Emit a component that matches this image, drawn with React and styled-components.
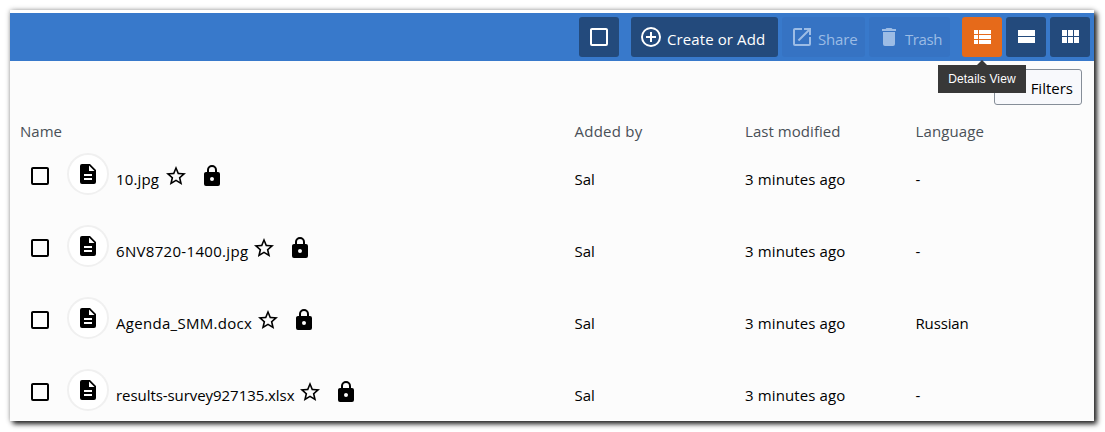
import React from "react";
import styled, { createGlobalStyle, css } from "styled-components";

const GlobalStyle = createGlobalStyle`
  * { box-sizing: border-box; }
  body {
    margin: 0;
    background: #fff;
    color: #000;
    font: 15px/24px "Open Sans", "Noto Sans", sans-serif;
    overflow: hidden;
  }
`;

const PATHS = {
  box: "M19,3H5C3.89,3 3,3.89 3,5V19A2,2 0 0,0 5,21H19A2,2 0 0,0 21,19V5C21,3.89 20.1,3 19,3M19,5V19H5V5H19Z",
  plus: "M12,20C7.59,20 4,16.41 4,12C4,7.59 7.59,4 12,4C16.41,4 20,7.59 20,12C20,16.41 16.41,20 12,20M12,2A10,10 0 0,0 2,12A10,10 0 0,0 12,22A10,10 0 0,0 22,12A10,10 0 0,0 12,2M13,7H11V11H7V13H11V17H13V13H17V11H13V7Z",
  share: "M14,3V5H17.59L7.76,14.83L9.17,16.24L19,6.41V10H21V3M19,19H5V5H12V3H5C3.89,3 3,3.9 3,5V19A2,2 0 0,0 5,21H19A2,2 0 0,0 21,19V12H19V19Z",
  trash: "M19,4H15.5L14.5,3H9.5L8.5,4H5V6H19M6,19A2,2 0 0,0 8,21H16A2,2 0 0,0 18,19V7H6V19Z",
  details: "M9,5V9H21V5M9,19H21V15H9M9,14H21V10H9M4,9H8V5H4M4,19H8V15H4M4,14H8V10H4V14Z",
  stream: "M4,5V11H21V5M4,18H21V12H4V18Z",
  grid: "M16,5V11H21V5M10,11H15V5H10M16,18H21V12H16M10,18H15V12H10M4,18H9V12H4M4,11H9V5H4V11Z",
  document: "M6,2A2,2 0 0,0 4,4V20A2,2 0 0,0 6,22H18A2,2 0 0,0 20,20V8L14,2M13,3.5L18.5,9H13M8,12H16V14H8M8,16H16V18H8Z",
  star: "M12,15.39L8.24,17.66L9.23,13.38L5.91,10.5L10.29,10.13L12,6.09L13.71,10.13L18.09,10.5L14.77,13.38L15.76,17.66M22,9.24L14.81,8.63L12,2L9.19,8.63L2,9.24L7.45,13.97L5.82,21L12,17.27L18.18,21L16.54,13.97L22,9.24Z",
  lock: "M12,17A2,2 0 0,0 14,15C14,13.89 13.1,13 12,13A2,2 0 0,0 10,15A2,2 0 0,0 12,17M18,8A2,2 0 0,1 20,10V20A2,2 0 0,1 18,22H6A2,2 0 0,1 4,20V10C4,8.89 4.9,8 6,8H7V6A5,5 0 0,1 12,1A5,5 0 0,1 17,6V8H18M12,3A3,3 0 0,0 9,6V8H15V6A3,3 0 0,0 12,3Z",
};

const Svg = styled.svg`
  display: block;
  flex: none;
  width: 24px;
  height: 24px;
  fill: currentColor;
`;

const Icon = ({ name, ...rest }) => (
  <Svg viewBox="0 0 24 24" fillRule="evenodd" aria-hidden="true" {...rest}>
    <path d={PATHS[name]} />
  </Svg>
);

const Page = styled.div`
  height: 432px;
  padding: 10px 11px 11px 10px;
`;

const Panel = styled.main`
  height: 411px;
  padding-top: 3px;
  background: linear-gradient(#fff 3px, #fcfcfc 3px);
  box-shadow: 3px 3px 5px rgba(0, 0, 0, 0.85), 0 0 5px rgba(0, 0, 0, 0.3);
`;

const Toolbar = styled.header`
  display: flex;
  justify-content: flex-end;
  gap: 12px;
  height: 48px;
  padding: 4px;
  background: #3879cb;
`;

const Group = styled.div`
  display: flex;
  gap: 4px;
`;

const Button = styled.button`
  position: relative;
  display: flex;
  align-items: center;
  gap: 4px;
  width: ${(p) => p.$width || 40}px;
  height: 40px;
  padding: 0 8px;
  border: 0;
  border-radius: 3px;
  font: inherit;
  white-space: nowrap;
  color: #fff;
  background: ${(p) => (p.$active ? "#e66a1a" : "#234a7c")};
  ${(p) =>
    p.$disabled &&
    css`
      color: #9cbce5;
      background: #3673c3;
    `}
`;

const Label = styled.span`
  padding-top: 3px;
  letter-spacing: ${(p) => p.$spacing || 0}px;
`;

const Tooltip = styled.span`
  position: absolute;
  z-index: 1;
  top: 48px;
  left: -24px;
  width: 88px;
  height: 28px;
  background: #383838;
  color: #fff;
  font: 12px/28px "Liberation Sans", Arial, sans-serif;
  letter-spacing: 0.15px;
  text-align: center;

  &::before {
    content: "";
    position: absolute;
    top: -5px;
    left: 39px;
    border: solid transparent;
    border-width: 0 5px 5px;
    border-bottom-color: #383838;
  }
`;

const FilterBar = styled.div`
  display: flex;
  justify-content: flex-end;
  padding: 8px 12px 0 0;
`;

const FilterButton = styled.button`
  width: 88px;
  height: 36px;
  padding: 2px 8px 0 0;
  border: 1px solid #868e98;
  border-radius: 3px;
  background: #f8f9fc;
  color: #000;
  font: inherit;
  text-align: right;
`;

const columns = css`
  display: grid;
  grid-template-columns: 554.5px 170.5px 170.5px 1fr;
  padding-left: 10px;
`;

const HeaderRow = styled.div`
  ${columns}
  margin-top: 14px;
  height: 25px;
  color: #495057;
`;

const Row = styled.div`
  ${columns}
  height: 72px;
`;

const Cell = styled.span`
  padding-top: ${(p) => p.$top || 0}px;
  letter-spacing: ${(p) => p.$spacing || 0}px;
  white-space: nowrap;
`;

const NameCell = styled.div`
  display: flex;
  align-items: flex-start;
  padding: 9px 0 0 8px;

  & > svg {
    margin-top: 11px;
  }
`;

const FileBadge = styled.span`
  display: flex;
  align-items: center;
  justify-content: center;
  width: 42px;
  height: 42px;
  margin: 0 7px 0 15px;
  border: 2px solid #f0f0f0;
  border-radius: 50%;
  background: #fff;
`;

const FileName = styled.span`
  width: ${(p) => p.$width}px;
  padding-top: 14px;
  letter-spacing: ${(p) => p.$spacing || 0}px;
  white-space: nowrap;
`;

const LockIcon = styled(Icon)`
  margin-left: 12px;
  position: relative;
  top: -0.5px;
`;

const files = [
  { name: "10.jpg", width: 47.5, spacing: 0.15, language: "-" },
  { name: "6NV8720-1400.jpg", width: 136.3, spacing: 0.32, language: "-" },
  { name: "Agenda_SMM.docx", width: 139.8, spacing: 0.3, language: "Russian" },
  { name: "results-survey927135.xlsx", width: 182.3, spacing: -0.06, language: "-" },
];

export default function App() {
  return (
    <Page>
      <GlobalStyle />
      <Panel>
        <Toolbar>
          <Button aria-label="Select all">
            <Icon name="box" />
          </Button>
          <Group>
            <Button $width={147}>
              <Icon name="plus" />
              <Label $spacing={0.1}>Create or Add</Label>
            </Button>
            <Button $width={83} $disabled>
              <Icon name="share" />
              <Label $spacing={-0.15}>Share</Label>
            </Button>
            <Button $width={81} $disabled>
              <Icon name="trash" />
              <Label $spacing={-0.4}>Trash</Label>
            </Button>
          </Group>
          <Group>
            <Button $active>
              <Icon name="details" />
              <Tooltip role="tooltip">Details View</Tooltip>
            </Button>
            <Button aria-label="List view">
              <Icon name="stream" />
            </Button>
            <Button aria-label="Grid view">
              <Icon name="grid" />
            </Button>
          </Group>
        </Toolbar>
        <FilterBar>
          <FilterButton>Filters</FilterButton>
        </FilterBar>
        <HeaderRow>
          <Cell>Name</Cell>
          <Cell $spacing={0.25}>Added by</Cell>
          <Cell $spacing={0.05}>Last modified</Cell>
          <Cell $spacing={0.12}>Language</Cell>
        </HeaderRow>
        {files.map((file) => (
          <Row key={file.name}>
            <NameCell>
              <Icon name="box" />
              <FileBadge>
                <Icon name="document" />
              </FileBadge>
              <FileName $width={file.width} $spacing={file.spacing}>{file.name}</FileName>
              <Icon name="star" />
              <LockIcon name="lock" />
            </NameCell>
            <Cell $top={23}>Sal</Cell>
            <Cell $top={23} $spacing={0.12}>3 minutes ago</Cell>
            <Cell $top={23} $spacing={-0.15}>{file.language}</Cell>
          </Row>
        ))}
      </Panel>
    </Page>
  );
}
